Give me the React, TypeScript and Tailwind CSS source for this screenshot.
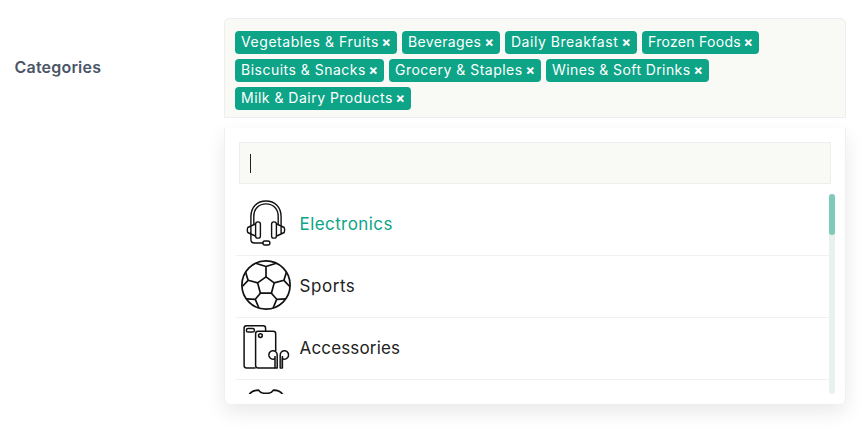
const tags = [
  { name: "Vegetables & Fruits", size: "w-[162px]", tracking: "tracking-[0.56px]" },
  { name: "Beverages", size: "w-[98px]", tracking: "tracking-[0.35px]" },
  { name: "Daily Breakfast", size: "w-[132px]", tracking: "tracking-[0.52px]" },
  { name: "Frozen Foods", size: "w-[117px]", tracking: "tracking-[0.3px]" },
  { name: "Biscuits & Snacks", size: "w-[149px]", tracking: "tracking-[0.49px]" },
  { name: "Grocery & Staples", size: "w-[152px]", tracking: "tracking-[0.49px]" },
  { name: "Wines & Soft Drinks", size: "w-[163px]", tracking: "tracking-[0.4px]" },
  { name: "Milk & Dairy Products", size: "w-[176px]", tracking: "tracking-[0.48px]" },
];

function Headset() {
  return (
    <svg className="size-[50px] shrink-0" viewBox="0 0 50 50" fill="none" stroke="#111" strokeWidth="1.4" strokeLinecap="round" strokeLinejoin="round">
      <path d="M9.9 27.5V18.5C9.9 9 16.2 3 25 3S40.1 9 40.1 18.5V27.5" />
      <path d="M12.8 26V18.5C12.8 10.5 18 5.9 25 5.9S37.2 10.5 37.2 18.5V26" />
      <rect x="14.6" y="23.9" width="4.8" height="16.2" rx="2.2" />
      <rect x="30.6" y="23.9" width="4.8" height="16.2" rx="2.2" />
      <path d="M14.4 26 9.9 28 6.8 29.5Q5.8 32 6.8 34.5L9.9 36 14.4 38M9.9 28V36" />
      <path d="M35.6 26 40.1 28 43.2 29.5Q44.2 32 43.2 34.5L40.1 36 35.6 38M40.1 28V36" />
      <path d="M9.9 36V41.5Q9.9 45 13.5 45H21.9" />
      <rect x="21.9" y="43" width="7" height="4" rx="1.9" />
    </svg>
  );
}

function Ball() {
  return (
    <svg className="size-[50px] shrink-0" viewBox="0 0 50 50" fill="none" stroke="#111" strokeWidth="1.7" strokeLinejoin="round">
      <circle cx="25" cy="25" r="24.1" />
      <path d="M25 16.9 33.2 22.9 30.4 33.2H19.4L16.6 22.9Z" />
      <path d="M25 16.9V6.5M14.7 3.3 25 6.5 35.3 3.3M16.6 22.9 7.1 20.3M33.2 22.9 42.9 20.3M4.6 12.2 7.1 20.3 1.3 26.5M45.4 12.2 42.9 20.3 48.7 26.5M19.4 33.2 14.3 39.3M30.4 33.2 35.7 39.3M5.2 38.8 14.3 39.3 17.9 48M44.8 38.8 35.7 39.3 32.1 48" />
    </svg>
  );
}

function Phones() {
  return (
    <svg className="size-[50px] shrink-0" viewBox="0 0 50 50" fill="none" stroke="#111" strokeWidth="1.5" strokeLinejoin="round">
      <path d="M14.6 46H5.5Q3.1 46 3.1 43.6V6.2Q3.1 3.8 5.5 3.8H22.2Q24.6 3.8 24.6 6.2V9.3" />
      <rect x="5.4" y="6.5" width="8" height="3.6" rx="1.7" />
      <path d="M34.7 29V11.7Q34.7 9.3 32.3 9.3H17Q14.6 9.3 14.6 11.7V43.6Q14.6 46 17 46H34" />
      <circle cx="19.4" cy="13.6" r="1.9" />
      <path d="M33.9 36.7A4.2 4.2 0 1 1 36.2 33V46H34V34" />
      <path d="M41.5 36.7A4.2 4.2 0 1 0 39.2 33V46H41.4V34" />
      <path stroke="#666" strokeWidth="1" d="M40.3 36V45.5" />
    </svg>
  );
}

function Shirt() {
  return (
    <svg className="size-[50px] shrink-0" viewBox="0 0 50 50" fill="none" stroke="#111" strokeWidth="1.7" strokeLinejoin="round">
      <path d="M8 11Q10.5 6.3 17.6 6.1Q19.5 9.4 25 9.4T32.4 6.1Q39.5 6.3 42 11" />
    </svg>
  );
}

const options = [
  { name: "Electronics", Icon: Headset, text: "text-[#0da487] tracking-[0.42px]" },
  { name: "Sports", Icon: Ball, text: "text-[#222] tracking-[0.55px]" },
  { name: "Accessories", Icon: Phones, text: "text-[#222] tracking-[0.16px]" },
  { name: "", Icon: Shirt, text: "" },
];

export default function App() {
  return (
    <main className="flex h-[429px] w-[864px] overflow-hidden bg-white pt-[18px] font-['Inter','Liberation_Sans',sans-serif]">
      <div className="w-[224px] shrink-0 pl-[14.5px] pt-[37px] text-[16px] leading-6 font-semibold tracking-[0.2px] text-[#4a5568]">
        Categories
      </div>
      <div className="w-[622px] shrink-0">
        <div className="flex h-[100px] flex-wrap content-start gap-[5px] rounded-t-[5px] border border-[#eee] bg-[#f9f9f6] px-2.5 py-3">
          {tags.map((tag) => (
            <div key={tag.name} className={`${tag.size} flex h-[23px] items-center justify-between rounded-[4px] bg-[#0da487] px-1.5 pb-0.5 text-[14px] leading-none whitespace-nowrap text-white`}>
              <span className={tag.tracking}>{tag.name}</span>
              <span className="font-bold">×</span>
            </div>
          ))}
        </div>
        <div className="mt-2.5 h-[276px] rounded-b-[6px] border-x border-[#f0f0f0] bg-white pt-3.5 shadow-[0_8px_20px_rgba(0,0,0,0.09)]">
          <div className="mx-3.5 flex h-[42px] items-center border border-[#eee] bg-[#f9f9f6] pl-2.5">
            <span className="h-[19px] w-px bg-[#222]" />
          </div>
          <div className="mt-2.5 mr-2.5 ml-[11px] flex h-[200px]">
            <div className="flex-1 overflow-hidden">
              {options.map(({ name, Icon, text }, i) => (
                <div key={i} className="flex h-[62px] items-start border-b border-[#f1f1f1] pt-1 pl-[5px]">
                  <Icon />
                  <span className={`${text} ml-[8.5px] text-[17px] leading-[53px]`}>{name}</span>
                </div>
              ))}
            </div>
            <div className="w-1.5 rounded-full bg-[#e9f1ef]">
              <div className="h-[41px] rounded-full bg-[#7dcaba]" />
            </div>
          </div>
        </div>
      </div>
    </main>
  );
}
